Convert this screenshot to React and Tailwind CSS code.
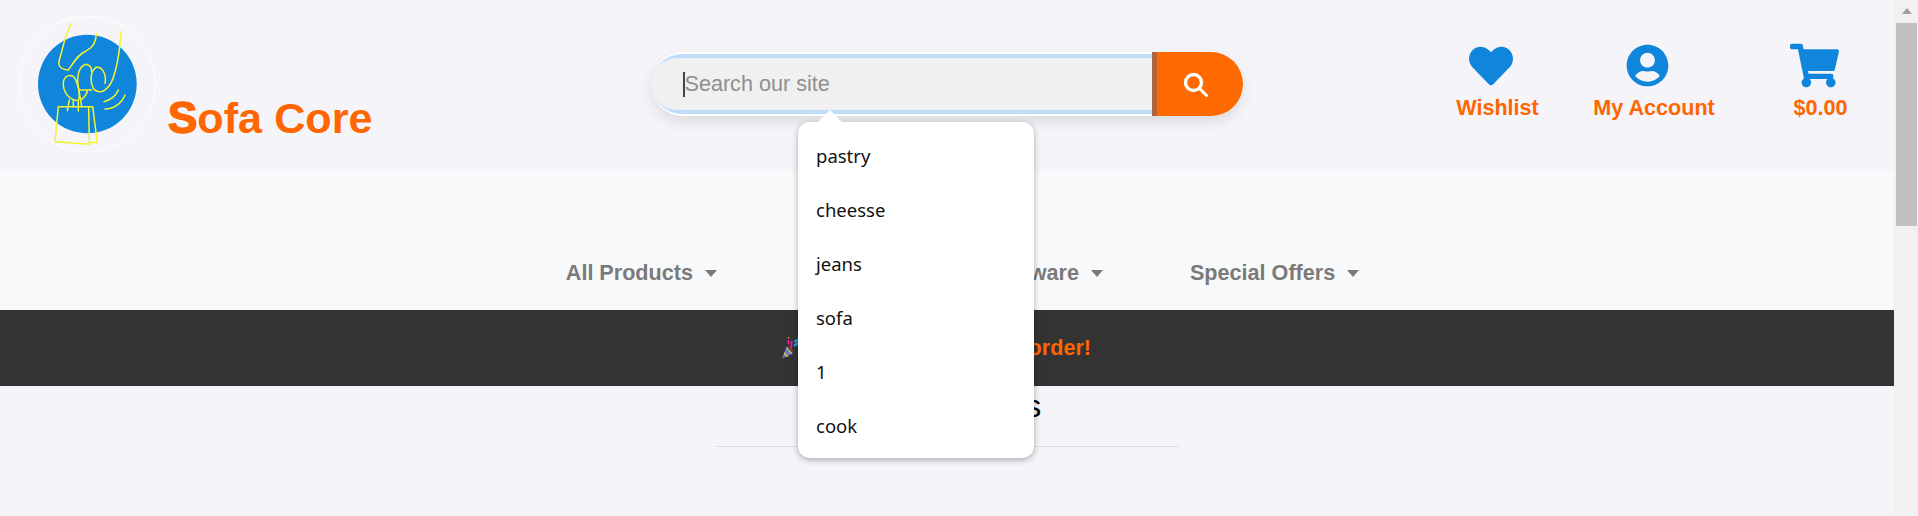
import React from 'react'
import { FaHeart, FaUserCircle, FaShoppingCart } from 'react-icons/fa'

const suggestions = ['pastry', 'cheesse', 'jeans', 'sofa', '1', 'cook']

const Logo = () => (
  <svg width="150" height="150" viewBox="0 0 450 450" className="shrink-0">
    <circle cx="232" cy="222" r="204" fill="none" stroke="#ffffff" strokeWidth="3" />
    <circle cx="232" cy="222" r="148" fill="#0f86dc" />
    <g fill="none" stroke="#f4f42c" strokeWidth="4.5" strokeLinecap="round" strokeLinejoin="round">
      <path d="M183 42C165 75 160 110 148 150C142 170 155 178 175 180C190 160 205 130 230 122C250 112 258 95 259 72" />
      <path d="M333 65C330 110 325 170 305 215C290 245 265 255 250 235C240 215 240 185 258 172C275 168 290 190 285 220" />
      <path d="M205 230C200 200 205 170 228 163C240 165 245 175 245 185" />
      <path d="M205 272C175 270 158 245 160 215C165 195 185 190 195 205C205 225 212 255 205 272" />
      <path d="M205 230L215 290M215 268C225 260 232 250 232 240M210 240L245 240" />
      <path d="M172 302L178 270M190 290L190 270M205 303L205 275" />
      <path d="M145 290L248 290L262 398L240 397M145 290L135 395L238 403L236 290" />
      <path d="M282 275C300 272 318 258 325 240M285 297C312 297 335 280 345 255" />
    </g>
  </svg>
)

const PartyPopper = () => (
  <svg width="16" height="22" viewBox="0 0 16 22" className="shrink-0">
    <path d="M0 21.5L4.5 9.5L11 16.5Z" fill="#5b7fd6" />
    <path d="M2.6 15L6.5 19.4L4.5 20.1L1.8 17ZM4.2 11L9 17.1L10.4 16.6L5 10Z" fill="#f4ac3c" />
    <path d="M6.5 10L11 14.5" stroke="#6b4a2a" strokeWidth="2" />
    <path d="M6 7C8 6 5 4 7 3" fill="none" stroke="#ec1a94" strokeWidth="1.8" />
    <path d="M9 11C10 8 9 6 10 4" fill="none" stroke="#ec1a94" strokeWidth="1.8" />
    <circle cx="6.5" cy="0.8" r="0.8" fill="#f4ac3c" />
    <path d="M12 9L16 6M12.5 5L16 2.5" stroke="#1a9fe8" strokeWidth="2.4" />
  </svg>
)

const Caret = () => (
  <span className="ml-3 w-0 h-0 border-x-[6.5px] border-x-transparent border-t-[7px] border-t-[#7a7a7a]" />
)

const IconLink = ({ icon, label, className, shift }) => (
  <a className={`flex flex-col items-center ${className}`}>
    <span className={`flex h-[43px] items-center justify-center ${shift}`}>{icon}</span>
    <span className="mt-2 text-[21.6px] leading-[26px] font-bold text-[#ff6600]">{label}</span>
  </a>
)

export default function App() {
  return (
    <div className="flex h-[516px] overflow-hidden bg-[#f4f4f9] font-['Liberation_Sans',Arial,sans-serif]">
      <div className="flex-1 min-w-0">
        {/* top header */}
        <header className="flex h-[170px]">
          <div className="flex w-[651px] pl-[10px] pt-[10px]">
            <Logo />
            <h1 className="ml-2 mt-[83px] h-[50px] text-[43.2px] leading-[50px] font-bold text-[#ff6600]">
              <span className="text-[44px] [-webkit-text-stroke:1.5px_#ff6600]">S</span>ofa Core
            </h1>
          </div>

          <div className="relative mt-[52px] h-16 w-[592px] shrink-0">
            <div className="flex h-16 rounded-[32px] shadow-[0_6px_14px_rgba(0,0,0,0.1)]">
              <div className="flex h-16 w-[501px] shrink-0 items-center rounded-l-[32px] border-y-2 border-white bg-[#bfdcfb]">
                <div className="flex h-[52px] w-full items-center rounded-l-[26px] bg-[#f0f0f0] pl-8">
                  <span className="h-[25px] w-[1.5px] bg-[#444444]" />
                  <span className="text-[21.6px] leading-[26px] text-[#8f8f8f]">Search our site</span>
                </div>
              </div>
              <button className="flex h-16 flex-1 items-center justify-center rounded-r-[32px] border-l-[5px] border-l-[#b0643c] bg-[#ff6a00] pr-[10px]">
                <svg width="28" height="28" viewBox="0 0 28 28" fill="none" stroke="#ffffff" strokeLinecap="round">
                  <circle cx="12.5" cy="12.5" r="8" strokeWidth="3.4" />
                  <path d="M18.5 18.5L25.5 25.5" strokeWidth="3" />
                </svg>
              </button>
            </div>

            {/* search suggestions */}
            <div className="absolute left-[147px] top-[70px] z-10 w-[236px] rounded-xl bg-white pb-[5px] pt-[7px] shadow-[0_2px_6px_rgba(0,0,0,0.3)] font-['Noto_Sans',sans-serif]">
              <span className="absolute -top-3 left-5 h-0 w-0 border-x-[12px] border-x-transparent border-b-[12px] border-b-white" />
              <ul>
                {suggestions.map((s) => (
                  <li key={s} className="flex h-[54px] items-center pl-[18px] text-[18.5px] text-[#111111]">{s}</li>
                ))}
              </ul>
            </div>
          </div>

          <div className="flex flex-1 pt-[44px]">
            <IconLink className="ml-[213px] w-[83px]" shift="mr-[14px]" label="Wishlist" icon={<FaHeart size={44} color="#0f86dc" />} />
            <IconLink className="ml-[54px] w-[122px]" shift="mr-[14px]" label="My Account" icon={<FaUserCircle size={43} color="#0f86dc" />} />
            <IconLink className="ml-[79px] w-[53px]" shift="mr-[13px]" label="$0.00" icon={<FaShoppingCart size={49} color="#0f86dc" />} />
          </div>
        </header>

        {/* category nav */}
        <nav className="flex h-[140px] items-end justify-center bg-[#f8f9fb] pb-[24px] pl-[31px] text-[21.6px] font-bold leading-[26px] text-[#7a7a7a]">
          <a className="flex items-center">All Products<Caret /></a>
          <a className="ml-[87px] flex w-[299px] items-center justify-end">ware<Caret /></a>
          <a className="ml-[87px] flex items-center">Special Offers<Caret /></a>
        </nav>

        {/* promo strip */}
        <div className="flex h-[76px] items-center justify-center gap-[6px] bg-[#333333] pr-[21px] text-[21.6px] font-bold text-[#ff6600]">
          <PartyPopper />
          <span className="w-[287px] text-right">order!</span>
        </div>

        <section className="flex flex-col items-center">
          <h2 className="mt-[2px] text-[32px] leading-[37px] text-black">Our Products</h2>
          <hr className="mr-[1px] mt-[21px] w-[464px] border-[#dddde4]" />
        </section>
      </div>

      {/* scrollbar */}
      <div className="flex w-6 shrink-0 flex-col items-center bg-[#f1f1f1] pl-[2px] pr-[1px]">
        <span className="mt-2 h-0 w-0 border-x-[5.5px] border-x-transparent border-b-[6px] border-b-[#a0a0a0]" />
        <div className="mt-[9px] h-[203px] w-full bg-[#c1c1c1]" />
      </div>
    </div>
  )
}
